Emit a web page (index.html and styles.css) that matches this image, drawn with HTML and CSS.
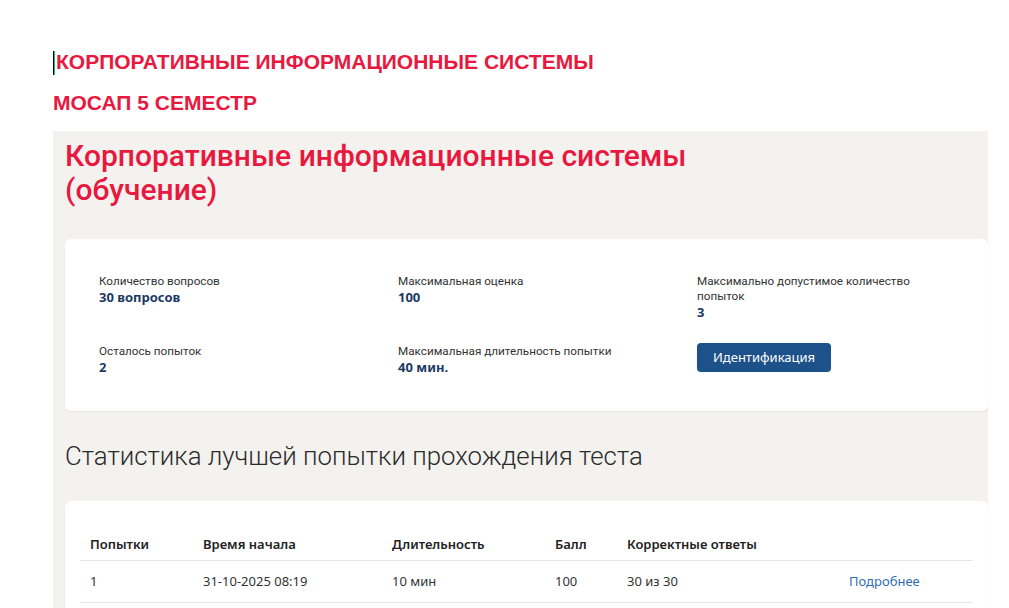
FILE: index.html
```html
<!DOCTYPE html>
<html lang="ru">
<head>
<meta charset="utf-8">
<title>Корпоративные информационные системы</title>
<link rel="stylesheet" href="styles.css">
</head>
<body>
<div class="page">
  <header class="doc-head">
    <p class="doc-line"><span class="caret"></span>КОРПОРАТИВНЫЕ ИНФОРМАЦИОННЫЕ СИСТЕМЫ</p>
    <p class="doc-line doc-line-2">МОСАП 5 СЕМЕСТР</p>
  </header>

  <main class="panel">
    <h1 class="title">Корпоративные информационные системы<br>(обучение)</h1>

    <section class="card info">
      <div class="info-item">
        <div class="label">Количество вопросов</div>
        <div class="value">30 вопросов</div>
      </div>
      <div class="info-item">
        <div class="label">Максимальная оценка</div>
        <div class="value">100</div>
      </div>
      <div class="info-item">
        <div class="label">Максимально допустимое количество<br>попыток</div>
        <div class="value">3</div>
      </div>
      <div class="info-item">
        <div class="label">Осталось попыток</div>
        <div class="value">2</div>
      </div>
      <div class="info-item">
        <div class="label">Максимальная длительность попытки</div>
        <div class="value">40 мин.</div>
      </div>
      <div class="info-item">
        <button class="btn" type="button">Идентификация</button>
      </div>
    </section>

    <h2 class="subtitle">Статистика лучшей попытки прохождения теста</h2>

    <section class="card table-card">
      <table class="stats">
        <colgroup>
          <col class="c1"><col class="c2"><col class="c3"><col class="c4"><col class="c5"><col class="c6">
        </colgroup>
        <thead>
          <tr>
            <th>Попытки</th>
            <th>Время начала</th>
            <th>Длительность</th>
            <th>Балл</th>
            <th>Корректные ответы</th>
            <th></th>
          </tr>
        </thead>
        <tbody>
          <tr>
            <td>1</td>
            <td>31-10-2025 08:19</td>
            <td>10 мин</td>
            <td>100</td>
            <td>30 из 30</td>
            <td><a class="more" href="#">Подробнее</a></td>
          </tr>
        </tbody>
      </table>
    </section>
  </main>
</div>
</body>
</html>
```
FILE: styles.css
```css
* { box-sizing: border-box; }

html, body {
  margin: 0;
  padding: 0;
  background: #ffffff;
}

body {
  font-family: "Noto Sans", "Open Sans", sans-serif;
  color: #333;
  overflow: hidden;
}

.page {
  width: 935px;
  margin-left: 53px;
}

.doc-head {
  padding-top: 50px;
}

.doc-line {
  margin: 0;
  font-family: "Liberation Sans", Arial, sans-serif;
  font-weight: 700;
  font-size: 21px;
  line-height: 24px;
  color: #e8183e;
  white-space: nowrap;
}

.doc-line-2 {
  margin-top: 16px;
}

.caret {
  display: inline-block;
  width: 2px;
  height: 24px;
  vertical-align: -6px;
  border-left: 1px solid #000;
  background: #22b3a6;
  margin-right: 1px;
}

.panel {
  margin-top: 16px;
  background: #f3f2ef;
  padding: 8px 0 40px 12px;
}

.title {
  margin: 0;
  font-family: Roboto, "Noto Sans", sans-serif;
  font-weight: 500;
  font-size: 30px;
  line-height: 34px;
  color: #e8183e;
}

.card {
  background: #fff;
  border-radius: 6px;
  box-shadow: 0 1px 2px rgba(0, 0, 0, 0.06);
}

.info {
  margin-top: 32px;
  padding: 35px 0 36px 34px;
  display: grid;
  grid-template-columns: 299px 299px 1fr;
  row-gap: 24px;
}

.label {
  font-family: Roboto, "Noto Sans", sans-serif;
  font-size: 11.7px;
  line-height: 15px;
  color: #333;
}

.value {
  font-size: 13px;
  line-height: 16px;
  font-weight: 700;
  color: #1b3a64;
}

.btn {
  display: inline-block;
  height: 29px;
  padding: 0 16px;
  border: 0;
  border-radius: 4px;
  background: #1d5189;
  color: #fff;
  font-family: "Noto Sans", "Open Sans", sans-serif;
  font-size: 13px;
  line-height: 29px;
  cursor: pointer;
  margin-top: -1px;
}

.subtitle {
  margin: 29px 0 0;
  font-family: Roboto, "Noto Sans", sans-serif;
  font-weight: 300;
  font-size: 25.8px;
  line-height: 32px;
  color: #2b2b2b;
}

.table-card {
  margin-top: 29px;
  padding: 23px 15px 10px;
}

.stats {
  width: 100%;
  border-collapse: collapse;
  table-layout: fixed;
  font-size: 13px;
  line-height: 16px;
}

.c1 { width: 113px; }
.c2 { width: 189px; }
.c3 { width: 163px; }
.c4 { width: 72px; }
.c5 { width: 222px; }
.c6 { width: auto; }

.stats th {
  text-align: left;
  font-weight: 600;
  color: #222;
  padding: 12px 10px 8px;
  border-bottom: 1px solid #e6e6e6;
}

.stats td {
  padding: 12px 10px 13px;
  color: #333;
  border-bottom: 1px solid #e6e6e6;
}

.more {
  color: #2f6db3;
  text-decoration: none;
}
```
